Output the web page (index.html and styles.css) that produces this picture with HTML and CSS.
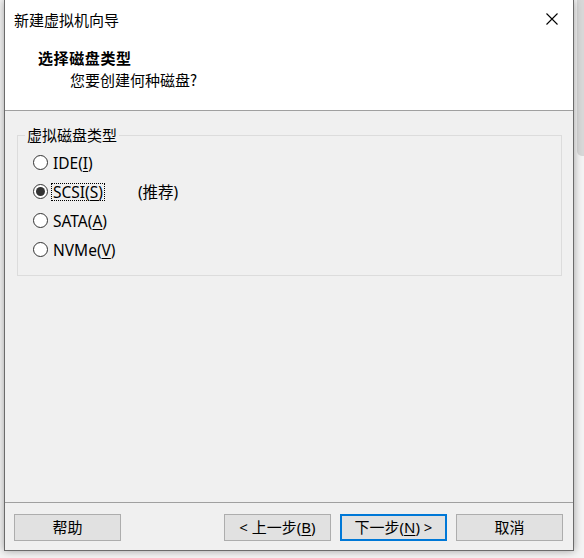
FILE: index.html
```html
<!DOCTYPE html>
<html lang="zh-CN">
<head>
<meta charset="utf-8">
<title>新建虚拟机向导</title>
<link rel="stylesheet" href="styles.css">
</head>
<body>
<div class="desktop">
  <div class="scroll-thumb"></div>
  <div class="window">
    <div class="header">
      <div class="titlebar">
        <span class="title">新建虚拟机向导</span>
        <svg class="close" width="12" height="12" viewBox="0 0 12 12"><path d="M0.5 0.5 L11.5 11.5 M11.5 0.5 L0.5 11.5" stroke="#000" stroke-width="1.1" fill="none"/></svg>
      </div>
      <div class="heading">选择磁盘类型</div>
      <div class="subheading">您要创建何种磁盘?</div>
    </div>
    <div class="content">
      <fieldset class="group">
        <legend class="group-label">虚拟磁盘类型</legend>
        <div class="radio-list">
          <div class="radio-row"><span class="radio"></span><span class="radio-text">IDE(<u>I</u>)</span></div>
          <div class="radio-row"><span class="radio checked"></span><span class="radio-text focused">SCSI(<u>S</u>)</span><span class="note">(推荐)</span></div>
          <div class="radio-row"><span class="radio"></span><span class="radio-text">SATA(<u>A</u>)</span></div>
          <div class="radio-row"><span class="radio"></span><span class="radio-text">NVMe(<u>V</u>)</span></div>
        </div>
      </fieldset>
    </div>
    <div class="footer">
      <button class="btn">帮助</button>
      <div class="spacer"></div>
      <button class="btn">&lt; 上一步(<u>B</u>)</button>
      <button class="btn default">下一步(<u>N</u>) &gt;</button>
      <button class="btn">取消</button>
    </div>
  </div>
</div>
</body>
</html>
```
FILE: styles.css
```css
* { box-sizing: border-box; }
html, body {
  margin: 0;
  padding: 0;
  background: #ffffff;
  width: 584px;
  height: 558px;
  overflow: hidden;
}
body {
  font-family: "Noto Sans", "Noto Sans CJK SC", sans-serif;
  font-size: 15px;
  color: #000;
}
.desktop {
  position: relative;
  width: 584px;
  height: 558px;
  background: #f4f4f4;
  padding-left: 4px;
}
.scroll-thumb {
  position: absolute;
  right: 0;
  top: 0;
  width: 7px;
  height: 156px;
  background: #d8d8d8;
  border-radius: 0 0 0 5px;
}
.window {
  position: relative;
  width: 570px;
  height: 551px;
  background: #f0f0f0;
  border: 1px solid #6b6b6b;
  border-top: none;
  box-shadow: 0 0 8px rgba(0,0,0,0.35);
  display: flex;
  flex-direction: column;
}
.header {
  background: #fff;
  height: 111px;
  border-bottom: 1px solid #a0a0a0;
  flex: none;
}
.titlebar {
  height: 40px;
  display: flex;
  align-items: center;
  padding-left: 9px;
  padding-right: 15px;
}
.title {
  flex: 1;
  font-family: "Noto Sans CJK SC", sans-serif;
  font-size: 15px;
  line-height: 20px;
}
.close { display: block; margin-top: -3px; }
.heading {
  font-family: "Noto Sans CJK SC", sans-serif;
  font-weight: bold;
  font-size: 15px;
  line-height: 20px;
  padding-left: 33px;
  letter-spacing: 0.6px;
  margin-top: 8px;
}
.subheading {
  font-family: "Noto Sans CJK SC", sans-serif;
  font-size: 15px;
  line-height: 20px;
  padding-left: 65px;
  margin-top: 2px;
}
.content {
  flex: 1;
  padding: 14px 11px 0 12px;
}
.group {
  margin: 0;
  padding: 3px 0 11px 15px;
  border: 1px solid #dcdcdc;
  min-width: 0;
}
.group-label {
  font-family: "Noto Sans CJK SC", sans-serif;
  line-height: 20px;
  padding: 0 2px;
  margin-left: -8px;
}
.radio-list { display: flex; flex-direction: column; }
.radio-row {
  height: 29px;
  display: flex;
  align-items: center;
}
.radio {
  width: 15px;
  height: 15px;
  border: 1px solid #333;
  border-radius: 50%;
  background: #fff;
  flex: none;
  display: flex;
  align-items: center;
  justify-content: center;
}
.radio.checked::after {
  content: "";
  width: 9px;
  height: 9px;
  border-radius: 50%;
  background: #333;
}
.radio-text {
  margin-left: 3px;
  font-size: 15.5px;
  line-height: 16px;
  padding: 0 1px;
  border: 1px solid transparent;
}
.radio-text.focused { border: 1px dotted #000; }
.note {
  margin-left: 33px;
  font-family: "Noto Sans", "Noto Sans CJK SC", sans-serif;
  font-size: 15.5px;
}
u { text-decoration: underline; text-underline-offset: 2px; }
.footer {
  flex: none;
  height: 48px;
  border-top: 1px solid #a0a0a0;
  display: flex;
  align-items: flex-start;
  padding: 11px 10px 0 9px;
  gap: 9px;
}
.spacer { flex: 1; }
.btn {
  width: 107px;
  height: 27px;
  background: #e1e1e1;
  border: 1px solid #adadad;
  font-family: "Noto Sans", "Noto Sans CJK SC", sans-serif;
  font-size: 15px;
  color: #000;
  padding: 0;
  line-height: 23px;
  margin: 0;
}
.btn.default { border: 2px solid #0078d7; }
```
